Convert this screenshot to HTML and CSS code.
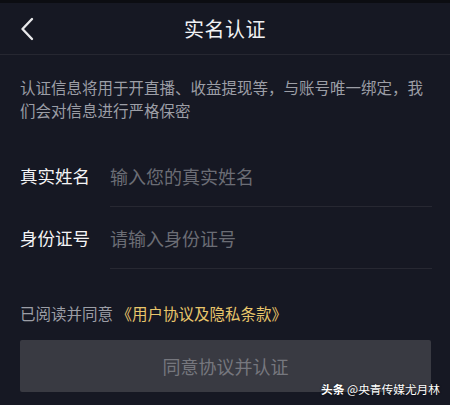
FILE: index.html
```html
<!DOCTYPE html>
<html lang="zh">
<head>
<meta charset="utf-8">
<link rel="stylesheet" href="styles.css">
</head>
<body>
<div class="page">
  <div class="status"></div>
  <header class="header">
    <span class="back">
      <svg width="14" height="24" viewBox="0 0 14 24"><path d="M12 2 L2.5 12 L12 22" fill="none" stroke="#e8e8ea" stroke-width="2.4" stroke-linecap="round" stroke-linejoin="round"/></svg>
    </span>
    <h1 class="title">实名认证</h1>
  </header>
  <p class="desc">认证信息将用于开直播、收益提现等，与账号唯一绑定，我们会对信息进行严格保密</p>
  <div class="form">
    <div class="row">
      <span class="label">真实姓名</span>
      <span class="field">输入您的真实姓名</span>
    </div>
    <div class="row">
      <span class="label">身份证号</span>
      <span class="field">请输入身份证号</span>
    </div>
  </div>
  <p class="agree">已阅读并同意 <span class="link">《用户协议及隐私条款》</span></p>
  <div class="btn">同意协议并认证</div>
  <div class="watermark"><b>头条</b> @央青传媒尤月林</div>
</div>
</body>
</html>
```
FILE: styles.css
```css
html, body {
  margin: 0;
  padding: 0;
  background: #161823;
}
.page {
  position: relative;
  width: 450px;
  height: 405px;
  overflow: hidden;
  background: #161823;
  font-family: "Noto Sans CJK SC", "Noto Sans", sans-serif;
}
.status {
  height: 3px;
  background: #0c0d12;
}
.header {
  position: relative;
  height: 51px;
  display: flex;
  align-items: center;
  justify-content: center;
  border-bottom: 1px solid #262731;
}
.back {
  position: absolute;
  left: 20px;
  top: 14px;
  display: flex;
}
.title {
  margin: 0;
  font-size: 20px;
  font-weight: 400;
  color: #f1f1f3;
  letter-spacing: 0.5px;
}
.desc {
  margin: 21px 18px 0 20px;
  font-size: 15.5px;
  line-height: 23px;
  color: #9c9ea6;
}
.form {
  margin-top: 23px;
}
.row {
  display: flex;
  align-items: stretch;
  height: 62px;
}
.label {
  width: 90px;
  padding-left: 20px;
  display: flex;
  align-items: center;
  padding-bottom: 1px;
  font-size: 17.5px;
  color: #f4f4f6;
}
.field {
  flex: 1;
  margin-right: 18px;
  display: flex;
  align-items: center;
  border-bottom: 1px solid #272832;
  font-size: 18px;
  color: #6b6d75;
}
.agree {
  margin: 33px 0 0 20px;
  font-size: 15.5px;
  line-height: 22px;
  color: #9c9ea6;
}
.link {
  color: #e9c66b;
}
.btn {
  margin: 16px 19px 0 20px;
  height: 52px;
  border-radius: 2px;
  background: #393a42;
  display: flex;
  align-items: center;
  justify-content: center;
  font-size: 18px;
  color: #76777e;
}
.watermark {
  position: absolute;
  right: 10px;
  bottom: 9px;
  font-size: 11.7px;
  line-height: 14px;
  color: #ffffff;
  text-shadow: 0 0 2px rgba(0,0,0,0.8);
}
.watermark b {
  font-weight: 700;
}
```
